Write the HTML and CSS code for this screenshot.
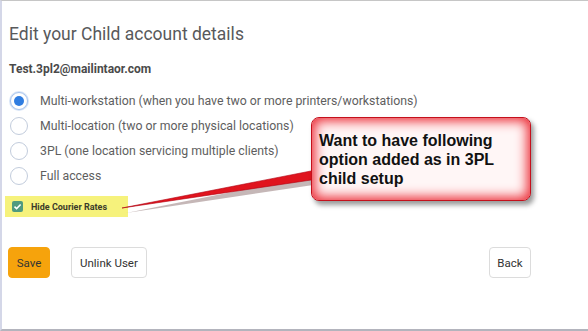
FILE: index.html
```html
<!DOCTYPE html>
<html>
<head>
<meta charset="utf-8">
<link rel="stylesheet" href="styles.css">
</head>
<body>
<div class="frame">
  <h1 class="title">Edit your Child account details</h1>
  <div class="email">Test.3pl2@mailintaor.com</div>
  <div class="options">
    <label class="opt"><span class="radio checked"></span>Multi-workstation (when you have two or more printers/workstations)</label>
    <label class="opt"><span class="radio"></span>Multi-location (two or more physical locations)</label>
    <label class="opt"><span class="radio"></span>3PL (one location servicing multiple clients)</label>
    <label class="opt"><span class="radio"></span>Full access</label>
  </div>
  <div class="hide-row">
    <span class="check"><svg width="9" height="9" viewBox="0 0 9 9"><path d="M1.5 4.6 L3.6 6.6 L7.6 2.4" fill="none" stroke="#fff" stroke-width="1.5"/></svg></span>
    <span class="hide-label">Hide Courier Rates</span>
  </div>
  <div class="actions">
    <button class="btn save">Save</button>
    <button class="btn">Unlink User</button>
    <span class="spacer"></span>
    <button class="btn back">Back</button>
  </div>

  <svg class="arrow" width="588" height="331" viewBox="0 0 588 331">
    <polygon points="124,210 316,172 318,181" fill="#5a3030" opacity="0.35" transform="translate(2,3)"/>
    <polygon points="122,208 316,170 318,179" fill="#e0141e" stroke="#b00010" stroke-width="0.6"/>
  </svg>
  <div class="callout">Want to have following option added as in 3PL child setup</div>
</div>
</body>
</html>
```
FILE: styles.css
```css
* { box-sizing: border-box; }
html, body { margin: 0; padding: 0; background: #fff; }
body { font-family: Roboto, "Noto Sans", sans-serif; }
.frame {
  position: relative;
  width: 588px;
  height: 331px;
  border-top: 1px solid #c6c6c6;
  border-left: 2px solid #d4d7e8;
  border-bottom: 2px solid #b3b4bd;
  padding: 0 0 0 6px;
  overflow: hidden;
}
.title {
  margin: 22px 0 0 1px;
  font-size: 17.5px;
  font-weight: 400;
  color: #58595b;
  line-height: 22px;
}
.email {
  margin: 16px 0 0 1px;
  font-size: 12px;
  font-weight: 700;
  color: #4a4a4a;
  line-height: 16px;
}
.options { margin-top: 11px; display: flex; flex-direction: column; }
.opt {
  display: flex;
  align-items: center;
  height: 25px;
  font-size: 12.3px;
  color: #5e5e5e;
}
.radio {
  width: 18px; height: 18px;
  border-radius: 50%;
  border: 1px solid #c2ccdc;
  margin: 0 12px 0 2px;
  background: #fff;
  display: inline-flex;
  align-items: center;
  justify-content: center;
}
.radio.checked { border-color: #a8c4ec; box-shadow: 0 0 0 1px #d8e5f8; }
.radio.checked::after {
  content: "";
  width: 10px; height: 10px;
  border-radius: 50%;
  background: #2f7de1;
}
.hide-row {
  margin: 8px 0 0 -3px;
  width: 123px;
  height: 21px;
  background: #f6f27c;
  display: flex;
  align-items: center;
  padding-left: 7px;
}
.check {
  width: 11px; height: 11px;
  border-radius: 2px;
  background: #4f9a7f;
  display: inline-flex;
  align-items: center;
  justify-content: center;
  margin-right: 8px;
}
.hide-label { font-size: 9px; font-weight: 700; color: #3b3b2a; }
.actions {
  margin-top: 30px;
  display: flex;
  align-items: center;
  width: 523px;
}
.spacer { flex: 1; }
.btn {
  font-family: Roboto, "Noto Sans", sans-serif;
  font-size: 11.5px;
  color: #333;
  background: #fff;
  border: 1px solid #dcdcdc;
  border-radius: 4px;
  height: 31px;
  padding: 0 8px;
  margin-right: 21px;
}
.btn.save { background: #f6a30c; border-color: #f6a30c; width: 42px; padding: 0; }
.btn.back { margin-right: 0; width: 42px; padding: 0; }
.arrow { position: absolute; left: -2px; top: -1px; pointer-events: none; }
.callout {
  position: absolute;
  left: 309px;
  top: 116px;
  width: 220px;
  height: 84px;
  padding: 13px 12px 0 7px;
  border: 1px solid #c4101c;
  border-radius: 8px;
  background: #fff6f6;
  box-shadow: inset 0 0 12px 3px #ec2a34, 3px 4px 5px rgba(0,0,0,0.4);
  font-family: "Liberation Sans", Arial, sans-serif;
  font-weight: 700;
  font-size: 16px;
  line-height: 19px;
  color: #111;
}
```
